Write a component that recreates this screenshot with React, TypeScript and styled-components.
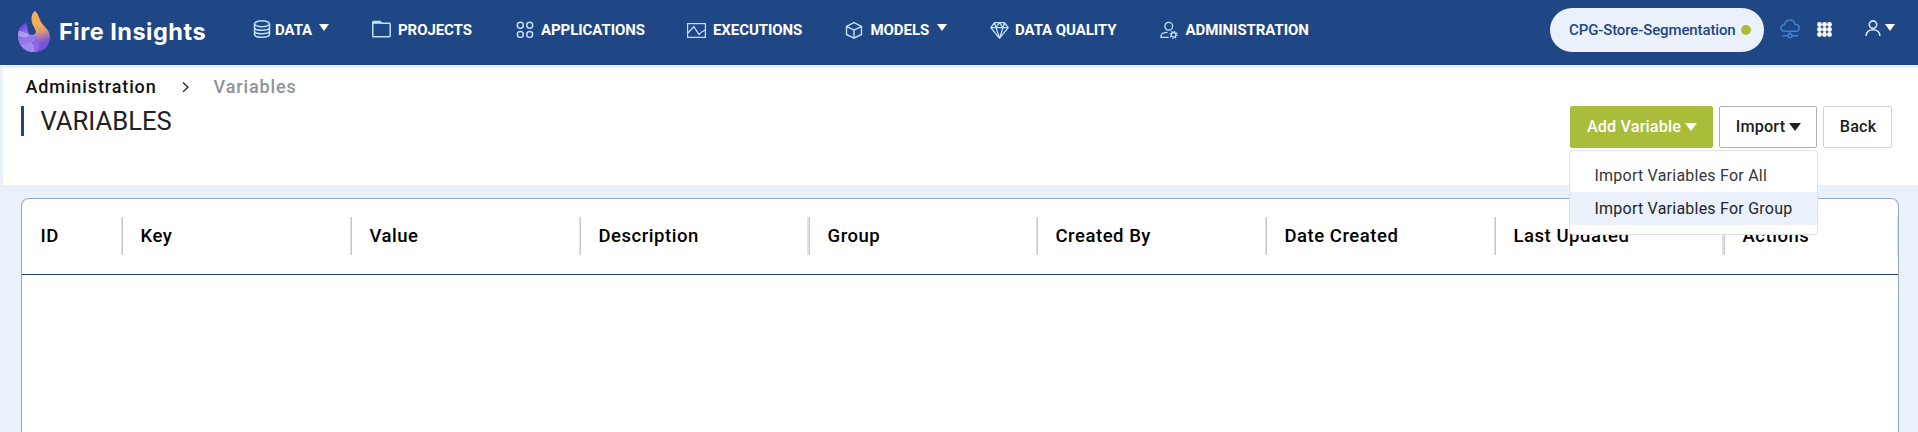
import React from 'react';
import styled, { createGlobalStyle } from 'styled-components';

const GlobalStyle = createGlobalStyle`
  *, *::before, *::after { box-sizing: border-box; }
  body {
    margin: 0;
    background: #eaf1fa;
    font-family: Roboto, "Liberation Sans", sans-serif;
    overflow: hidden;
  }
  svg { display: block; flex: none; }
`;

const Page = styled.div`
  display: flex;
  flex-direction: column;
  width: 1918px;
  height: 432px;
  overflow: hidden;
`;

const TopBar = styled.header`
  display: flex;
  flex: none;
  height: 65px;
  background: #1f4785;
`;

const Brand = styled.div`
  display: flex;
  width: 252.5px;
  padding: 10px 0 0 17px;
`;

const BrandName = styled.span`
  margin: 4px 0 0 8px;
  color: #fff;
  font: 700 23.5px/36px Inter, sans-serif;
  letter-spacing: 0.5px;
  white-space: nowrap;
`;

const Nav = styled.nav`
  display: flex;
  width: 1297.5px;
`;

const NavItem = styled.a<{ $width: number; $gap: number }>`
  display: flex;
  flex: none;
  width: ${(p) => p.$width}px;
  gap: ${(p) => p.$gap}px;
  padding-top: 20px;
  color: #fff;
  font-size: 15px;
  font-weight: 700;
  line-height: 20px;
  letter-spacing: -0.07px;
  white-space: nowrap;
`;

const NavCaret = styled.i<{ $gap: number }>`
  margin: 4px 0 0 ${(p) => p.$gap}px;
  width: 0;
  height: 0;
  border: 5px solid transparent;
  border-top: 7px solid #fff;
  border-bottom: 0;
`;

const Tools = styled.div`
  display: flex;
  align-items: flex-start;
`;

const ProjectPill = styled.div`
  display: flex;
  align-items: center;
  gap: 5px;
  width: 214px;
  height: 44px;
  margin-top: 8px;
  padding-left: 19px;
  border-radius: 22px;
  background: #eaf1fa;
  color: #1f4785;
  font-size: 15px;
  font-weight: 500;
  letter-spacing: -0.12px;
  white-space: nowrap;
`;

const StatusDot = styled.i`
  width: 10px;
  height: 10px;
  border-radius: 50%;
  background: #a9bd3a;
`;

const ToolButton = styled.span<{ $left: number; $top: number }>`
  display: flex;
  margin: ${(p) => p.$top}px 0 0 ${(p) => p.$left}px;
`;

const PageHead = styled.section`
  display: flex;
  flex: none;
  justify-content: space-between;
  height: 117px;
  margin: 3px 0 0 3px;
  padding-right: 26px;
  background: #fff;
`;

const Crumbs = styled.div`
  display: flex;
  align-items: center;
  height: 38px;
  padding: 0 0 2px 22.5px;
  color: #111;
  font-size: 18px;
  font-weight: 500;
  letter-spacing: 0.88px;
  white-space: nowrap;
`;

const CrumbChevron = styled.svg`
  margin: 2px 25px 0 25px;
`;

const CurrentCrumb = styled.span`
  color: #8d949d;
`;

const Title = styled.h1`
  height: 30px;
  margin: 0 0 0 18px;
  padding-left: 16.5px;
  border-left: 3px solid #1f4785;
  color: #212121;
  font-size: 25.6px;
  font-weight: 400;
  line-height: 31px;
`;

const Actions = styled.div`
  display: flex;
  gap: 6px;
  padding-top: 38px;
`;

const Button = styled.button<{ $width: number; $tone?: 'primary' | 'dark' }>`
  display: flex;
  align-items: center;
  justify-content: center;
  gap: 4px;
  width: ${(p) => p.$width}px;
  height: 42px;
  padding: 0 0 0 1px;
  border: 1px solid ${(p) => (p.$tone === 'primary' ? '#a9bd3a' : p.$tone === 'dark' ? '#adb1b5' : '#ced4da')};
  border-radius: 2px;
  background: ${(p) => (p.$tone === 'primary' ? '#a9bd3a' : '#fff')};
  color: ${(p) => (p.$tone === 'primary' ? '#fff' : '#212121')};
  font: 500 16.2px/20px Roboto, sans-serif;
  letter-spacing: 0.15px;
  white-space: nowrap;
`;

const Caret = styled.i`
  width: 0;
  height: 0;
  border: 6px solid transparent;
  border-top: 8px solid currentColor;
  border-bottom: 0;
`;

const MenuAnchor = styled.div`
  position: relative;
`;

const Menu = styled.div`
  position: absolute;
  z-index: 2;
  top: 44px;
  right: -1px;
  width: 249px;
  height: 85px;
  padding-top: 8px;
  border: 1px solid #dfe1e4;
  border-radius: 4px;
  background: #fff;
`;

const MenuItem = styled.div<{ $active?: boolean }>`
  height: 33px;
  padding-left: 24.5px;
  background: ${(p) => (p.$active ? '#eaf1fa' : '#fff')};
  color: ${(p) => (p.$active ? '#212529' : '#33373b')};
  font-size: 16px;
  line-height: 33px;
  letter-spacing: 0.23px;
  white-space: nowrap;
`;

const Table = styled.section`
  flex: 1;
  width: 1878px;
  margin: 13px 0 0 21px;
  border: 1px solid #8fabc8;
  border-bottom: 0;
  border-radius: 8px 8px 0 0;
  background: #fff;
`;

const HeadRow = styled.div`
  display: flex;
  align-items: center;
  height: 76px;
  padding-bottom: 1px;
  border-bottom: 1px solid #1f4785;
`;

const HeadCell = styled.div<{ $width: number; $wide?: boolean }>`
  flex: none;
  width: ${(p) => p.$width}px;
  height: 38px;
  padding: 0 0 0 17.5px;
  border-right: 1px solid #c9c9c9;
  box-shadow: inset ${(p) => (p.$wide ? -2 : -1)}px 0 #e0e0e0;
  color: #000;
  font-size: 18.5px;
  font-weight: 500;
  line-height: 38px;
  letter-spacing: 0.53px;
  white-space: nowrap;

  &:first-child {
    padding-left: 18.5px;
  }

  &:last-child {
    border-color: #e0e0e0;
    box-shadow: none;
  }
`;

const columns: [string, number, boolean?][] = [
  ['ID', 101],
  ['Key', 229],
  ['Value', 229],
  ['Description', 229, true],
  ['Group', 228],
  ['Created By', 229],
  ['Date Created', 229],
  ['Last Updated', 229, true],
  ['Actions', 173],
];

const line = { fill: 'none', stroke: '#bfe0fb', strokeWidth: 1.5 };

const FlameLogo = () => (
  <svg width="34" height="42" viewBox="0 0 34 42">
    <defs>
      <linearGradient id="flame" x1="0.4" y1="0" x2="0.6" y2="1">
        <stop offset="0.3" stopColor="#f6ae55" />
        <stop offset="0.52" stopColor="#d99a7c" />
        <stop offset="0.8" stopColor="#7a52dc" />
      </linearGradient>
      <linearGradient id="bowl" x1="0.3" y1="0" x2="0.6" y2="1">
        <stop offset="0" stopColor="#6039dc" />
        <stop offset="0.45" stopColor="#9f82ec" />
        <stop offset="1" stopColor="#a58bee" />
      </linearGradient>
    </defs>
    <path d="M18 1C21 3 22 8 24 12C27 17 33 20 33 27C33 36 26 42 17 42C13 42 11 41 9 39C15 35 20 29 19 22C18 17 14 14 14.500 8C14.800 4 16 2 18 1Z" fill="url(#flame)" />
    <path d="M9 12.500C11 16 10 19 11 22C12 26 18 26 18.500 22C20 28 24 36 20 41.700C9 44 1 36 1 26C1 19 4 15 9 12.500Z" fill="url(#bowl)" />
    <path d="M1.500 21C6 20.500 9 23 12 26C9 28 5 27 1 25.500Z" fill="#c3b2f6" opacity="0.6" />
    <path d="M1 26C5 27.500 9 28 12.500 26L18 26C17 31 10 35 4 35C2 32 1 29 1 26Z" fill="#8c6ce6" opacity="0.6" />
    <path d="M19 26C22 32 23 38 20 41.700L17 42C18 38 17 35 14.500 32.500C17 30.500 18.500 28.500 19 26Z" fill="#7a52dc" opacity="0.6" />
  </svg>
);

const DatabaseIcon = () => (
  <svg width="18" height="18" viewBox="0 0 18 18" {...line}>
    <ellipse cx="9" cy="3.800" rx="7.500" ry="3" />
    <path d="M1.500 3.800v10.400c0 1.700 3.300 3 7.500 3s7.500-1.300 7.500-3V3.800M1.500 7.300c0 1.700 3.300 3 7.500 3s7.500-1.300 7.500-3M1.500 10.800c0 1.700 3.300 3 7.500 3s7.500-1.300 7.500-3" />
  </svg>
);

const FolderIcon = () => (
  <svg width="19" height="18" viewBox="0 0 19 18" {...line}>
    <path d="M.8 16.200V2.200Q.8 1.500 1.500 1.500H8l1.800 1.800H17.500q.7 0 .7.700V15.800q0 .9-.9.900H1.500Q.8 16.700.8 16.200Z" />
    <path d="M1 2.800h8.500" strokeWidth="2" />
  </svg>
);

const AppsIcon = () => (
  <svg width="18" height="18" viewBox="0 0 18 18" {...line}>
    <circle cx="4.300" cy="5.200" r="3" />
    <circle cx="13.700" cy="5.200" r="3" />
    <circle cx="4.300" cy="14.400" r="3" />
    <circle cx="13.700" cy="14.400" r="3" />
  </svg>
);

const ExecutionsIcon = () => (
  <svg width="19" height="18" viewBox="0 0 19 18" {...line} strokeWidth="1.200">
    <path d="M.6 3.600h17.800v13.800H.6zM1 13l5.800-6.400 5.200 7.900 2.700-2.600L18.400 10" />
  </svg>
);

const CubeIcon = () => (
  <svg width="18" height="19" viewBox="0 0 18 19" {...line} strokeWidth="1.400">
    <path d="M9 2.600 16.500 6.300v8.200L9 18.200 1.500 14.500V6.300zM1.500 6.300 9 10.100 16.500 6.300M9 10.100v8.100" strokeLinejoin="round" />
  </svg>
);

const DiamondIcon = () => (
  <svg width="19" height="19" viewBox="0 0 19 19" {...line} strokeWidth="1.300">
    <path d="M4.500 2.600h10l3.700 5-8.700 10.700L.8 7.600zM.8 7.600h17.400M9.500 2.600 6 7.600l3.500 10.700L13 7.600zM4.500 2.600 6 7.600M14.500 2.600 13 7.600" strokeLinejoin="round" />
  </svg>
);

const AdminIcon = () => (
  <svg width="18" height="19" viewBox="0 0 18 19" {...line} strokeWidth="1.300">
    <circle cx="8.700" cy="6.300" r="3.900" />
    <path d="M8.700 17.400H1V16c0-2.500 2.500-3.700 6.500-3.700" />
    <circle cx="13.600" cy="14.800" r="2.300" />
    <circle cx="13.600" cy="14.800" r="3.500" strokeWidth="1.400" strokeDasharray="1.200 1.549" />
  </svg>
);

const CloudIcon = () => (
  <svg width="20" height="20" viewBox="0 0 20 20" fill="none" stroke="#3f80d8" strokeWidth="1.500" strokeLinecap="round">
    <path d="M5 12.300C2.500 12.300 1 10.800 1 9S2.500 5.800 4.500 5.800C5 2.800 7 .9 9.800.9s5 1.900 5.300 4.600c2.500 0 4.100 1.300 4.100 3.400s-1.600 3.400-4 3.400zM10 12.500v2.800M2.500 16.800H8M12 16.800h5.500" />
    <circle cx="10" cy="16.800" r="2" />
  </svg>
);

const dots = [2.5, 7.5, 12.5];
const GridIcon = () => (
  <svg width="15" height="15" viewBox="0 0 15 15" fill="#fff">
    {dots.map((y) => dots.map((x) => <circle key={`${x}-${y}`} cx={x} cy={y} r="2.400" />))}
  </svg>
);

const UserIcon = () => (
  <svg width="16" height="16" viewBox="0 0 16 16" fill="none" stroke="#d4e8fb" strokeWidth="1.600">
    <circle cx="8" cy="4.600" r="3.700" />
    <path d="M1 15.800C1.500 11.800 4.500 9.700 8 9.700s6.500 2.100 7 6.100" />
  </svg>
);

const navigation = [
  { label: 'DATA', icon: <DatabaseIcon />, width: 119.5, gap: 4.5, caret: 2.5 },
  { label: 'PROJECTS', icon: <FolderIcon />, width: 144, gap: 7 },
  { label: 'APPLICATIONS', icon: <AppsIcon />, width: 171, gap: 7 },
  { label: 'EXECUTIONS', icon: <ExecutionsIcon />, width: 158, gap: 7 },
  { label: 'MODELS', icon: <CubeIcon />, width: 145, gap: 7.5, caret: 0 },
  { label: 'DATA QUALITY', icon: <DiamondIcon />, width: 170, gap: 6 },
  { label: 'ADMINISTRATION', icon: <AdminIcon />, width: 160, gap: 7.5 },
];

export default function App() {
  return (
    <Page>
      <GlobalStyle />
      <TopBar>
        <Brand>
          <FlameLogo />
          <BrandName>Fire Insights</BrandName>
        </Brand>
        <Nav>
          {navigation.map((item) => (
            <NavItem key={item.label} $width={item.width} $gap={item.gap}>
              {item.icon}
              <span>{item.label}</span>
              {item.caret !== undefined && <NavCaret $gap={item.caret} />}
            </NavItem>
          ))}
        </Nav>
        <Tools>
          <ProjectPill>
            CPG-Store-Segmentation
            <StatusDot />
          </ProjectPill>
          <ToolButton $left={16} $top={19}><CloudIcon /></ToolButton>
          <ToolButton $left={17} $top={22}><GridIcon /></ToolButton>
          <ToolButton $left={33} $top={20}><UserIcon /></ToolButton>
          <ToolButton $left={4} $top={20}><NavCaret $gap={0} /></ToolButton>
        </Tools>
      </TopBar>
      <PageHead>
        <div>
          <Crumbs>
            <span>Administration</span>
            <CrumbChevron width="7" height="12" viewBox="0 0 7 12" fill="none" stroke="#222" strokeWidth="1.300">
              <path d="m1 1.500 5 4.700-5 4.700" />
            </CrumbChevron>
            <CurrentCrumb>Variables</CurrentCrumb>
          </Crumbs>
          <Title>VARIABLES</Title>
        </div>
        <Actions>
          <Button $width={143} $tone="primary">Add Variable<Caret /></Button>
          <MenuAnchor>
            <Button $width={98} $tone="dark">Import<Caret /></Button>
            <Menu>
              <MenuItem>Import Variables For All</MenuItem>
              <MenuItem $active>Import Variables For Group</MenuItem>
            </Menu>
          </MenuAnchor>
          <Button $width={69}>Back</Button>
        </Actions>
      </PageHead>
      <Table>
        <HeadRow>
          {columns.map(([label, width, wide]) => (
            <HeadCell key={label} $width={width} $wide={wide}>{label}</HeadCell>
          ))}
        </HeadRow>
      </Table>
    </Page>
  );
}
